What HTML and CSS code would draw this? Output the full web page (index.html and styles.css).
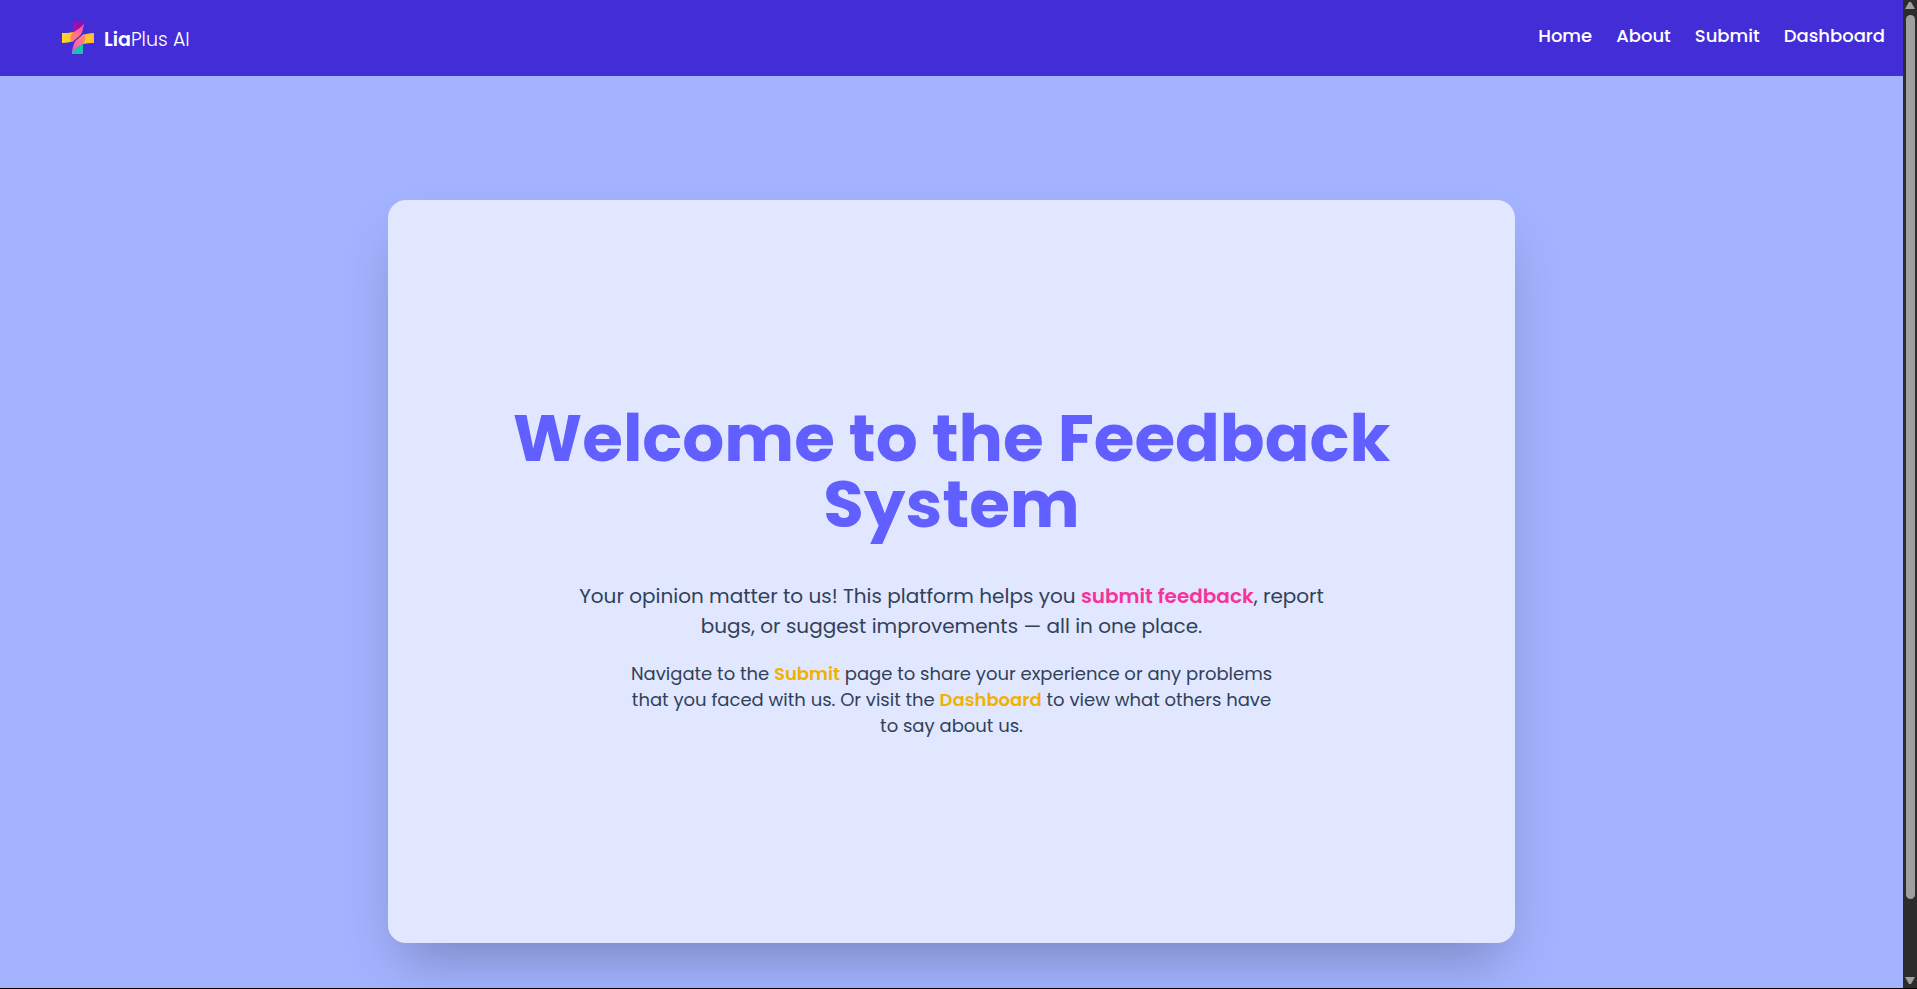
FILE: index.html
```html
<!DOCTYPE html>
<html lang="en">
<head>
<meta charset="utf-8">
<title>LiaPlus AI Feedback System</title>
<link rel="stylesheet" href="styles.css">
</head>
<body>
<div class="viewport">
  <div class="page">
    <header class="navbar">
      <a class="brand" href="#" aria-label="LiaPlus AI">
        <svg class="brand-mark" viewBox="0 0 32 32" aria-hidden="true">
          <defs>
            <linearGradient id="yellow" x1="0" y1="0" x2="1" y2="0"><stop offset="0" stop-color="#ffd821"/><stop offset="1" stop-color="#ffb937"/></linearGradient>
            <linearGradient id="purple" x1="0" y1="0" x2="1" y2="0"><stop offset="0" stop-color="#a30fb4"/><stop offset="1" stop-color="#8510a8"/></linearGradient>
            <linearGradient id="pink" x1="0" y1="1" x2="1" y2="0"><stop offset="0" stop-color="#ff8a66"/><stop offset=".5" stop-color="#ff6d88"/><stop offset="1" stop-color="#f23cc0"/></linearGradient>
            <linearGradient id="rose" x1="0" y1="1" x2="1" y2="0"><stop offset="0" stop-color="#f24cc4"/><stop offset=".5" stop-color="#ff6d98"/><stop offset="1" stop-color="#ff8f62"/></linearGradient>
          </defs>
          <path fill="url(#purple)" d="M11 0h11v2c-3 4-7 7-11 9z"/>
          <path fill="#1cc0b4" d="M21 32H10v-2c3-4 7-7 11-9z"/>
          <path fill="url(#yellow)" d="M0 11c4 0 7 0 11-1l3 7c-4 3-9 4-14 4z"/>
          <path fill="url(#yellow)" d="M32 21c-4 0-7 0-11 1l-3-7c4-3 9-4 14-4z"/>
          <path fill="url(#pink)" d="M22 1C21 12 18 16 10 20 8 17 8 14 10 11 15 8 19 6 22 1z"/>
          <path fill="url(#rose)" d="M10 31C11 20 14 16 22 12c2 3 2 6 0 9-5 3-9 5-12 10z"/>
          <path fill="none" stroke="#432dd7" stroke-width="1.2" d="M23 2C22 11 20 13 16 16 12 19 10 21 9 30"/>
        </svg>
        <span class="brand-name"><b>Lia</b>Plus AI</span>
      </a>
      <nav class="links" aria-label="Main">
        <a href="#">Home</a>
        <a href="#">About</a>
        <a href="#">Submit</a>
        <a href="#">Dashboard</a>
      </nav>
    </header>
    <main class="hero">
      <section class="card">
        <h1 class="title">Welcome to the Feedback System</h1>
        <p class="lead">Your opinion matter to us! This platform helps you <strong class="pink">submit feedback</strong>, report bugs, or suggest improvements — all in one place.</p>
        <p class="note">Navigate to the <strong class="gold">Submit</strong> page to share your experience or any problems that you faced with us. Or visit the <strong class="gold">Dashboard</strong> to view what others have to say about us.</p>
      </section>
    </main>
  </div>
  <div class="scrollbar" aria-hidden="true">
    <svg class="arrow" viewBox="0 0 10 8"><path d="M4 0h2l4 7H0z"/></svg>
    <div class="track"><div class="thumb"></div></div>
    <svg class="arrow" viewBox="0 0 10 8"><path d="M0 1h10L6 8H4z"/></svg>
  </div>
</div>
</body>
</html>
```
FILE: styles.css
```css
* { box-sizing: border-box; }
body {
  margin: 0;
  font-family: Poppins, Inter, sans-serif;
  color: #314158;
  background: #000;
}
.viewport {
  display: grid;
  grid-template-columns: 1fr 14px;
  height: 100vh;
  border-bottom: 1px solid #000;
}
.page {
  display: flex;
  flex-direction: column;
  overflow: hidden;
  background: #a3b3ff;
}
.navbar {
  display: flex;
  justify-content: space-between;
  height: 76px;
  flex: none;
  padding: 0 18px 0 62px;
  background: #432dd7;
}
.brand {
  display: flex;
  align-items: center;
  gap: 10px;
  color: #fff;
  text-decoration: none;
}
.brand-mark { width: 32px; height: 32px; }
.brand-name { font-size: 19px; line-height: 24px; font-weight: 300; padding-top: 4px; }
.brand-name b { font-weight: 600; }
.links {
  display: flex;
  gap: 24px;
  padding-top: 23px;
}
.links a {
  color: #fff;
  font-size: 18px;
  line-height: 26px;
  font-weight: 500;
  text-decoration: none;
}
.hero {
  display: flex;
  justify-content: center;
  padding: 124px 24px 0;
}
.card {
  display: flex;
  flex-direction: column;
  align-items: center;
  justify-content: center;
  width: 100%;
  max-width: 1127px;
  min-height: 743px;
  padding: 0 106px;
  border-radius: 18px;
  background: #e0e7ff;
  box-shadow: 0 28px 55px -13px rgb(0 0 0 / 25%);
  text-align: center;
}
.title {
  margin: 0 0 44px;
  color: #615fff;
  font-size: 66px;
  line-height: 66px;
  font-weight: 700;
}
.lead {
  max-width: 760px;
  margin: 0 0 20px;
  font-size: 20px;
  line-height: 30px;
}
.note {
  max-width: 656px;
  margin: 0;
  font-size: 18px;
  line-height: 26px;
}
.pink, .gold { font-weight: 600; }
.pink { color: #f6339a; }
.gold { color: #f0b100; }
.scrollbar {
  display: flex;
  flex-direction: column;
  align-items: center;
  gap: 5px;
  padding: 2px 0 4px;
  background: #2c2c2c;
}
.arrow { width: 10px; height: 8px; fill: #9f9f9f; flex: none; }
.track { flex: 1; width: 9px; }
.thumb { height: 92.5%; border-radius: 5px; background: #9f9f9f; }
```
